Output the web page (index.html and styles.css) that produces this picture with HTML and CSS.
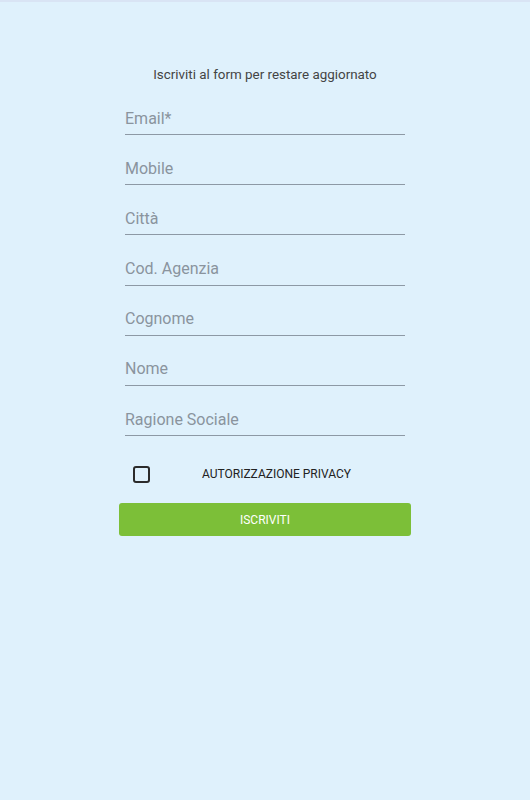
FILE: index.html
```html
<!DOCTYPE html>
<html>
  <head>
    <title>Iscriviti</title>
    <link rel="stylesheet" href="styles.css">
  </head>
  <body>
    <div class="page">
      <form class="signup-form">
        <p class="form-title">Iscriviti al form per restare aggiornato</p>
        <div class="fields">
          <input type="email" class="field" placeholder="Email*" />
          <input type="text" class="field" placeholder="Mobile" />
          <input type="text" class="field" placeholder="Città" />
          <input type="text" class="field" placeholder="Cod. Agenzia" />
          <input type="text" class="field" placeholder="Cognome" />
          <input type="text" class="field" placeholder="Nome" />
          <input type="text" class="field" placeholder="Ragione Sociale" />
        </div>
        <label class="privacy-row">
          <span class="checkbox"></span>
          <span class="privacy-label">AUTORIZZAZIONE PRIVACY</span>
        </label>
        <button type="button" class="btn-submit">ISCRIVITI</button>
      </form>
    </div>
  </body>
</html>
```

FILE: styles.css
```css
body {
  font-family: Roboto, "Liberation Sans", sans-serif;
  background-color: #dff1fc;
  margin: 0;
  height: 800px;
  border-top: 2px solid #d9e4f4;
  box-sizing: border-box;
}
.page {
  display: flex;
  justify-content: center;
}
.signup-form {
  width: 292px;
  padding-top: 65px;
}
.form-title {
  margin: 0;
  font-size: 13.4px;
  line-height: 16px;
  color: #444;
  text-align: center;
}
.fields {
  display: flex;
  flex-direction: column;
  gap: 23.2px;
  margin-top: 25px;
  padding-left: 6px;
}
.field {
  width: 280px;
  box-sizing: border-box;
  font-family: Roboto, "Liberation Sans", sans-serif;
  font-size: 16px;
  line-height: 20px;
  height: 27px;
  padding: 0 0 6px 0;
  border: none;
  border-bottom: 1px solid #8d99a5;
  background: transparent;
  outline: none;
}
.field::placeholder {
  color: #8a949e;
}
.privacy-row {
  display: flex;
  align-items: center;
  margin-top: 29px;
  height: 18px;
}
.checkbox {
  width: 13px;
  height: 13px;
  border: 2px solid #2b2b2b;
  border-radius: 3px;
  margin-left: 14px;
}
.privacy-label {
  flex: 1;
  text-align: center;
  font-size: 12px;
  color: #222;
  padding-right: 8px;
}
.btn-submit {
  display: block;
  width: 292px;
  height: 33px;
  margin-top: 20px;
  border: none;
  border-radius: 3px;
  background-color: #7cbf38;
  color: #fff;
  font-family: Roboto, "Liberation Sans", sans-serif;
  font-size: 12px;
  cursor: pointer;
}
```
